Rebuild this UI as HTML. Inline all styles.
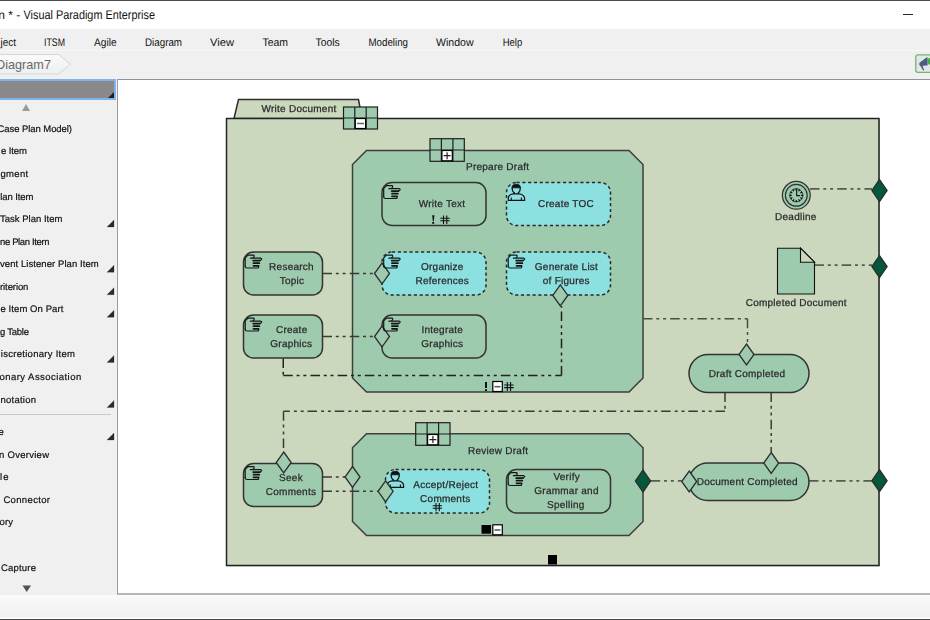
<!DOCTYPE html>
<html><head><meta charset="utf-8">
<style>
html,body{margin:0;padding:0;}
body{width:930px;height:620px;position:relative;overflow:hidden;background:#f0f0f0;font-family:"Liberation Sans",sans-serif;}
#diagram,#panelsvg{will-change:transform;}
.a{position:absolute;white-space:nowrap;}
#topline{left:0;top:0;width:930px;height:1px;background:#4b4b4b;}
#title{left:0;top:1px;width:930px;height:28px;background:#fff;}
#ttext{left:-4px;top:6px;font-size:11.5px;color:#1a1a1a;}
#minbtn{left:903px;top:14px;width:10px;height:1px;background:#222;}
#menu{left:0;top:29px;width:930px;height:21px;background:#f0f0f0;border-bottom:1px solid #f7f7f7;}
.mi{top:36px;font-size:10.5px;color:#1a1a1a;}
#crumbbar{left:0;top:51px;width:930px;height:28px;background:#f0f0f0;}
#panel{left:0;top:79px;width:117px;height:516px;background:#f0f0f0;overflow:hidden;}
.pi{font-size:10.5px;color:#1c1c1c;}
.tri{width:0;height:0;border-style:solid;border-width:0 0 7px 7px;border-color:transparent transparent #2b2b2b transparent;}
#canvas{left:117px;top:79px;width:813px;height:516px;background:#fff;border-left:1px solid #9a9ea3;border-top:1px solid #8f949a;border-bottom:2px solid #b3b6ba;box-sizing:border-box;}
#status{left:0;top:595px;width:930px;height:24px;background:linear-gradient(#fafafa 0%,#f0f1f2 85%,#eff0f2 92%,#ffffff 96%,#ffffff 100%);}
#botline{left:0;top:619px;width:930px;height:1px;background:#4b4b4b;}
</style></head>
<body>
<div class="a" id="topline"></div>
<div class="a" id="title"></div>
<div class="a" id="minbtn"></div>
<div class="a" id="menu"></div>
<div class="a" id="crumbbar"></div>
<svg class="a" style="left:0;top:0" width="600" height="50" font-family="Liberation Sans" text-rendering="geometricPrecision" fill="#111">
<text x="5" y="18.7" font-size="12" text-anchor="end">n</text><text x="8.2" y="18.7" font-size="12">*</text><text x="16.3" y="18.7" font-size="12">-</text>
<g transform="translate(23.5,18.7) scale(0.8695,1)"><text x="0" y="0" font-size="12.5">Visual Paradigm Enterprise</text></g>
<g transform="translate(16,45.5) scale(0.9,1)"><text x="0" y="0" font-size="11" text-anchor="end">ject</text></g>
<g transform="translate(44,45.5) scale(0.7992,1)"><text x="0" y="0" font-size="11">ITSM</text></g>
<g transform="translate(94,45.5) scale(0.9240,1)"><text x="0" y="0" font-size="11">Agile</text></g>
<g transform="translate(145,45.5) scale(0.8902,1)"><text x="0" y="0" font-size="11">Diagram</text></g>
<g transform="translate(210,45.5) scale(1.0151,1)"><text x="0" y="0" font-size="11">View</text></g>
<g transform="translate(262.4,45.5) scale(0.9518,1)"><text x="0" y="0" font-size="11">Team</text></g>
<g transform="translate(315.6,45.5) scale(0.9385,1)"><text x="0" y="0" font-size="11">Tools</text></g>
<g transform="translate(368.5,45.5) scale(0.8849,1)"><text x="0" y="0" font-size="11">Modeling</text></g>
<g transform="translate(436,45.5) scale(0.9611,1)"><text x="0" y="0" font-size="11">Window</text></g>
<g transform="translate(502.7,45.5) scale(0.8620,1)"><text x="0" y="0" font-size="11">Help</text></g>
</svg>
<!-- breadcrumb -->
<svg class="a" style="left:0;top:50px" width="80" height="28">
 <defs><linearGradient id="cg" x1="0" y1="0" x2="0" y2="1"><stop offset="0" stop-color="#fbfbfb"/><stop offset="1" stop-color="#eceef0"/></linearGradient></defs>
 <path d="M-5,4.5 H58.5 L70.5,14.3 L58.5,24 H-5 Z" fill="url(#cg)" stroke="#d3d6da" stroke-width="1"/>
 <text x="51" y="19.3" text-anchor="end" font-family="Liberation Sans" font-size="12.7" fill="#686868">Diagram7</text>
</svg>
<!-- megaphone button -->
<svg class="a" style="left:913px;top:53px" width="17" height="21">
 <rect x="2.8" y="1.9" width="20" height="17.4" rx="2" fill="#e4e6e8" stroke="#72b570" stroke-width="1.3"/>
 <path d="M6.2,11 Q6.2,9.5 7.5,9 L13.5,4.6 L14.6,4.3 L14.6,12.6 L13.5,12.4 L9.5,12.8 L11.2,17.2 L10.2,17.4 L7.4,13 Q6.2,12.5 6.2,11 Z" fill="#4c5c7c"/>
 <circle cx="18" cy="8.2" r="3.6" fill="#44b044"/>
</svg>
<div class="a" id="panel">
 <div class="a" style="left:0;top:0;width:116px;height:21px;background:#7db5eb;"></div>
 <div class="a" style="left:0;top:2px;width:114px;height:17px;background:#898989;"></div>
 <div class="a tri" style="left:108px;top:13px;border-width:0 0 6px 6px;border-color:transparent transparent #1e1e1e transparent;"></div>
 <div class="a" style="left:22px;top:25px;width:0;height:0;border-style:solid;border-width:0 4.5px 7px 4.5px;border-color:transparent transparent #9a9a9a transparent;"></div>
</div>
<div class="a" id="canvas"></div>
<div class="a" id="status"></div>
<div class="a" id="botline"></div>

<svg class="a" id="panelsvg" style="left:0;top:0" width="117" height="620" font-family="Liberation Sans" font-size="9.5" fill="#111" stroke="#111" stroke-width="0.2" text-rendering="geometricPrecision">
<text x="-2.5" y="131.8" textLength="74.5">Case Plan Model)</text>
<text x="1" y="154.4" textLength="26.0">e Item</text>
<text x="0.5" y="176.9" textLength="27.7">gment</text>
<text x="0.3" y="199.5" textLength="33.0">lan Item</text>
<text x="0" y="222.0" textLength="62.5">Task Plan Item</text>
<path d="M107,227.0 L114,227.0 L114,220.0 Z" fill="#2b2b2b"/>
<text x="0" y="244.6" textLength="49.4">ne Plan Item</text>
<text x="0" y="267.2" textLength="98.7">vent Listener Plan Item</text>
<path d="M107,272.2 L114,272.2 L114,265.2 Z" fill="#2b2b2b"/>
<text x="0" y="289.7" textLength="28.4">riterion</text>
<path d="M107,294.7 L114,294.7 L114,287.7 Z" fill="#2b2b2b"/>
<text x="0.5" y="312.3" textLength="62.8">e Item On Part</text>
<path d="M107,317.3 L114,317.3 L114,310.3 Z" fill="#2b2b2b"/>
<text x="0" y="334.8" textLength="29.0">g Table</text>
<text x="0.8" y="357.4" textLength="74.2">iscretionary Item</text>
<path d="M107,362.4 L114,362.4 L114,355.4 Z" fill="#2b2b2b"/>
<text x="-0.5" y="380.0" textLength="81.7">onary Association</text>
<text x="0.5" y="402.5" textLength="35.5">notation</text>
<path d="M107,407.5 L114,407.5 L114,400.5 Z" fill="#2b2b2b"/>
<text x="-1.5" y="435.0" textLength="4.9">e</text>
<path d="M107,440.0 L114,440.0 L114,433.0 Z" fill="#2b2b2b"/>
<text x="-1" y="457.6" textLength="50.0">n Overview</text>
<text x="0" y="480.2" textLength="8.5">le</text>
<text x="3.4" y="502.8" textLength="46.6">Connector</text>
<text x="-0.5" y="525.4" textLength="13.4">ory</text>
<text x="1" y="570.6" textLength="35.0">Capture</text>
<path d="M0,414.5 H111" stroke="#c9c9c9" stroke-width="1.2"/>
<path stroke="none" d="M22.5,585.5 H31 L26.75,592 Z" fill="#505050"/>
</svg>
<svg class="a" id="diagram" style="left:0;top:0" width="930" height="620" font-family="Liberation Sans" text-rendering="geometricPrecision">
<path d="M234,118.5 L238.5,99.5 H358.5 L362,118.5 Z" fill="#cbd8bd" stroke="#2d2d2d" stroke-width="1.5"/>
<rect x="227.5" y="119.5" width="652.5" height="447" fill="#777" opacity="0.35"/>
<rect x="226.5" y="118.5" width="652.5" height="447" fill="#cbd8bd" stroke="#222" stroke-width="1.5"/>
<text x="261.5" y="111.5" text-anchor="start" font-size="10" letter-spacing="0.25" fill="#2a2a2a" stroke="#2a2a2a" stroke-width="0.25">Write Document</text>
<rect x="343.5" y="107" width="34.0" height="22" fill="#9ecbae" stroke="#1e1e1e" stroke-width="1.2"/>
<path d="M354.8,107 V129 M366.2,107 V129 M343.5,118.0 H377.5" stroke="#1e1e1e" stroke-width="1.2" fill="none"/>
<rect x="355.3" y="118.5" width="10.3" height="10.0" fill="#fff" stroke="#000" stroke-width="1.2"/>
<path d="M357.0,123.5 H364.0" stroke="#666" stroke-width="1.5"/>
<path d="M366.5,150.5 H629 L643,164.5 V378 L629,392 H366.5 L352.5,378 V164.5 Z" fill="#9ecbae" stroke="#3d3f3c" stroke-width="1.5"/>
<rect x="430" y="138.7" width="34.30000000000001" height="22.600000000000023" fill="#9ecbae" stroke="#1e1e1e" stroke-width="1.2"/>
<path d="M441.4,138.7 V161.3 M452.9,138.7 V161.3 M430,150.0 H464.3" stroke="#1e1e1e" stroke-width="1.2" fill="none"/>
<rect x="441.9" y="150.5" width="10.4" height="10.3" fill="#fff" stroke="#000" stroke-width="1.2"/>
<path d="M443.6,155.7 H450.6 M447.1,152.2 V159.2" stroke="#222" stroke-width="1.2"/>
<text x="466" y="170.3" text-anchor="start" font-size="10" letter-spacing="0.25" fill="#2a2a2a" stroke="#2a2a2a" stroke-width="0.25">Prepare Draft</text>
<path d="M486,382 V388" stroke="#111" stroke-width="2"/><rect x="485" y="389.2" width="2" height="1.8" fill="#111"/>
<rect x="492.8" y="381.5" width="9.5" height="10" fill="#fff" stroke="#000" stroke-width="1.2"/><path d="M494.5,386.7 H500.5" stroke="#555" stroke-width="1.5"/>
<path d="M507.3,382 V391 M510.6,382 V391 M504.2,385 H513.7 M504.2,387.6 H513.7" stroke="#111" stroke-width="1.1"/>
<path d="M366.5,433.7 H629 L643,447.7 V521.5 L629,535.5 H366.5 L352.5,521.5 V447.7 Z" fill="#9ecbae" stroke="#3d3f3c" stroke-width="1.5"/>
<rect x="415.7" y="422.7" width="34.30000000000001" height="22.600000000000023" fill="#9ecbae" stroke="#1e1e1e" stroke-width="1.2"/>
<path d="M427.1,422.7 V445.3 M438.6,422.7 V445.3 M415.7,434.0 H450" stroke="#1e1e1e" stroke-width="1.2" fill="none"/>
<rect x="427.6" y="434.5" width="10.4" height="10.3" fill="#fff" stroke="#000" stroke-width="1.2"/>
<path d="M429.4,439.6 H436.4 M432.9,436.1 V443.1" stroke="#222" stroke-width="1.2"/>
<text x="468" y="454" text-anchor="start" font-size="10" letter-spacing="0.25" fill="#2a2a2a" stroke="#2a2a2a" stroke-width="0.25">Review Draft</text>
<rect x="481.5" y="525" width="9.5" height="8.7" fill="#000"/>
<rect x="492.8" y="524.8" width="9.5" height="10" fill="#fff" stroke="#000" stroke-width="1.2"/><path d="M494.5,530 H500.5" stroke="#555" stroke-width="1.5"/>
<rect x="548" y="555" width="9" height="9.5" fill="#000"/>
<path d="M322.5,273.5 L374.5,273.5" fill="none" stroke="#3a3a3a" stroke-width="1.5" stroke-dasharray="9.5 3.8 3 3.8 3 4.1"/>
<path d="M322.5,336.5 L374.5,336.5" fill="none" stroke="#3a3a3a" stroke-width="1.5" stroke-dasharray="9.5 3.8 3 3.8 3 4.1"/>
<path d="M283.25,358.5 L283.25,375.5" fill="none" stroke="#222" stroke-width="1.5" stroke-dasharray="9.5 3.8 3 3.8 3 4.1"/>
<path d="M283.25,375.5 L561.5,375.5" fill="none" stroke="#222" stroke-width="1.5" stroke-dasharray="9.5 3.8 3 3.8 3 4.1"/>
<path d="M561.5,375.5 L561.5,306" fill="none" stroke="#222" stroke-width="1.5" stroke-dasharray="9.5 3.8 3 3.8 3 4.1"/>
<path d="M643,318.8 L747.5,318.8" fill="none" stroke="#4a4d47" stroke-width="1.5" stroke-dasharray="9.5 3.8 3 3.8 3 4.1"/>
<path d="M747.5,318.8 L747.5,343.5" fill="none" stroke="#4a4d47" stroke-width="1.5" stroke-dasharray="9.5 3.8 3 3.8 3 4.1"/>
<path d="M725,392.5 L725,411.3" fill="none" stroke="#3a3a3a" stroke-width="1.5" stroke-dasharray="9.5 3.8 3 3.8 3 4.1"/>
<path d="M725,411.3 L283.5,411.3" fill="none" stroke="#3a3a3a" stroke-width="1.5" stroke-dasharray="9.5 3.8 3 3.8 3 4.1"/>
<path d="M283.5,411.3 L283.5,452" fill="none" stroke="#3a3a3a" stroke-width="1.5" stroke-dasharray="9.5 3.8 3 3.8 3 4.1"/>
<path d="M771.2,392.5 L771.2,452.3" fill="none" stroke="#3a3a3a" stroke-width="1.5" stroke-dasharray="9.5 3.8 3 3.8 3 4.1"/>
<path d="M322.5,477 L345,477" fill="none" stroke="#3a3a3a" stroke-width="1.5" stroke-dasharray="9.5 3.8 3 3.8 3 4.1"/>
<path d="M322.5,491.3 L378,491.3" fill="none" stroke="#3a3a3a" stroke-width="1.5" stroke-dasharray="9.5 3.8 3 3.8 3 4.1"/>
<path d="M650.7,480.8 L681.6,480.8" fill="none" stroke="#565b53" stroke-width="1.8" stroke-dasharray="9.5 3.8 3 3.8 3 4.1"/>
<path d="M809,480.8 L872,480.8" fill="none" stroke="#565b53" stroke-width="1.8" stroke-dasharray="9.5 3.8 3 3.8 3 4.1"/>
<path d="M810,188.8 L872,188.8" fill="none" stroke="#565b53" stroke-width="1.8" stroke-dasharray="9.5 3.8 3 3.8 3 4.1"/>
<path d="M814.5,265.2 L872,265.2" fill="none" stroke="#565b53" stroke-width="1.8" stroke-dasharray="9.5 3.8 3 3.8 3 4.1"/>
<rect x="382" y="182.5" width="104" height="43.0" rx="10" fill="#9ecbae" stroke="#333" stroke-width="1.5"/>
<text x="442" y="207" text-anchor="middle" font-size="10" letter-spacing="0.25" fill="#2a2a2a" stroke="#2a2a2a" stroke-width="0.25">Write Text</text>
<path d="M432.2,215.2 H434.4 L433.8,221.2 H432.8 Z" fill="#111"/><rect x="432.2" y="222" width="2" height="1.8" fill="#111"/>
<path d="M443.5,215.5 V224 M446.8,215.5 V224 M440.3,218.2 H449.7 M440.3,220.8 H449.7" stroke="#111" stroke-width="1.1"/>
<rect x="506.5" y="182.5" width="104.0" height="43.0" rx="10" fill="#8de0e0" stroke="#2a2a2a" stroke-width="1.5" stroke-dasharray="3.2 2.6"/>
<g transform="translate(505.0,181.0)" stroke="#111" fill="none">
<path d="M6.9,6.8 A4.3,3.5 0 0 1 15.5,6.8 Z" fill="#111" stroke="#111" stroke-width="0.8"/>
<path d="M7.1,6.8 Q7.1,10.8 9.4,11.9 V13 M15.3,6.8 Q15.3,10.8 13.2,11.9 V13" stroke-width="1.2"/>
<path d="M3.3,19.4 V17 Q3.6,13.2 8.6,12.8 H13.8 Q18.8,13.2 19.6,17 V19.4 Z" stroke-width="1.2"/>
<path d="M6.3,16.5 V19.4 M16.4,16.5 V19.4" stroke-width="1.1"/>
</g>
<text x="566" y="207" text-anchor="middle" font-size="10" letter-spacing="0.25" fill="#2a2a2a" stroke="#2a2a2a" stroke-width="0.25">Create TOC</text>
<rect x="243.5" y="252" width="79.0" height="43" rx="10" fill="#9ecbae" stroke="#333" stroke-width="1.5"/>
<text x="291.5" y="270" text-anchor="middle" font-size="10" letter-spacing="0.25" fill="#2a2a2a" stroke="#2a2a2a" stroke-width="0.25">Research</text>
<text x="292" y="284.3" text-anchor="middle" font-size="10" letter-spacing="0.25" fill="#2a2a2a" stroke="#2a2a2a" stroke-width="0.25">Topic</text>
<rect x="382" y="252" width="104" height="43" rx="10" fill="#8de0e0" stroke="#2a2a2a" stroke-width="1.5" stroke-dasharray="3.2 2.6"/>
<text x="442.3" y="270.3" text-anchor="middle" font-size="10" letter-spacing="0.25" fill="#2a2a2a" stroke="#2a2a2a" stroke-width="0.25">Organize</text>
<text x="442.3" y="284.3" text-anchor="middle" font-size="10" letter-spacing="0.25" fill="#2a2a2a" stroke="#2a2a2a" stroke-width="0.25">References</text>
<rect x="506.5" y="252" width="104.0" height="43" rx="10" fill="#8de0e0" stroke="#2a2a2a" stroke-width="1.5" stroke-dasharray="3.2 2.6"/>
<text x="566.5" y="270.3" text-anchor="middle" font-size="10" letter-spacing="0.25" fill="#2a2a2a" stroke="#2a2a2a" stroke-width="0.25">Generate List</text>
<text x="566.3" y="284.3" text-anchor="middle" font-size="10" letter-spacing="0.25" fill="#2a2a2a" stroke="#2a2a2a" stroke-width="0.25">of Figures</text>
<rect x="243.5" y="315" width="79.0" height="43" rx="10" fill="#9ecbae" stroke="#333" stroke-width="1.5"/>
<text x="291.7" y="333" text-anchor="middle" font-size="10" letter-spacing="0.25" fill="#2a2a2a" stroke="#2a2a2a" stroke-width="0.25">Create</text>
<text x="291.3" y="347" text-anchor="middle" font-size="10" letter-spacing="0.25" fill="#2a2a2a" stroke="#2a2a2a" stroke-width="0.25">Graphics</text>
<rect x="382" y="315" width="104" height="43" rx="10" fill="#9ecbae" stroke="#333" stroke-width="1.5"/>
<text x="442.3" y="333.3" text-anchor="middle" font-size="10" letter-spacing="0.25" fill="#2a2a2a" stroke="#2a2a2a" stroke-width="0.25">Integrate</text>
<text x="442.3" y="347.3" text-anchor="middle" font-size="10" letter-spacing="0.25" fill="#2a2a2a" stroke="#2a2a2a" stroke-width="0.25">Graphics</text>
<rect x="243.5" y="463.5" width="79.0" height="43.0" rx="10" fill="#9ecbae" stroke="#333" stroke-width="1.5"/>
<text x="291" y="481.3" text-anchor="middle" font-size="10" letter-spacing="0.25" fill="#2a2a2a" stroke="#2a2a2a" stroke-width="0.25">Seek</text>
<text x="291" y="495.3" text-anchor="middle" font-size="10" letter-spacing="0.25" fill="#2a2a2a" stroke="#2a2a2a" stroke-width="0.25">Comments</text>
<rect x="385.5" y="469.5" width="104.0" height="43.5" rx="10" fill="#8de0e0" stroke="#2a2a2a" stroke-width="1.5" stroke-dasharray="3.2 2.6"/>
<g transform="translate(384.0,468.0)" stroke="#111" fill="none">
<path d="M6.9,6.8 A4.3,3.5 0 0 1 15.5,6.8 Z" fill="#111" stroke="#111" stroke-width="0.8"/>
<path d="M7.1,6.8 Q7.1,10.8 9.4,11.9 V13 M15.3,6.8 Q15.3,10.8 13.2,11.9 V13" stroke-width="1.2"/>
<path d="M3.3,19.4 V17 Q3.6,13.2 8.6,12.8 H13.8 Q18.8,13.2 19.6,17 V19.4 Z" stroke-width="1.2"/>
<path d="M6.3,16.5 V19.4 M16.4,16.5 V19.4" stroke-width="1.1"/>
</g>
<text x="445.8" y="487.6" text-anchor="middle" font-size="10" letter-spacing="0.25" fill="#2a2a2a" stroke="#2a2a2a" stroke-width="0.25">Accept/Reject</text>
<text x="445.3" y="501.7" text-anchor="middle" font-size="10" letter-spacing="0.25" fill="#2a2a2a" stroke="#2a2a2a" stroke-width="0.25">Comments</text>
<path d="M436,503 V511.3 M439.3,503 V511.3 M432.7,505.7 H442 M432.7,508.3 H442" stroke="#111" stroke-width="1.1"/>
<rect x="506.5" y="469.5" width="104.0" height="43.5" rx="10" fill="#9ecbae" stroke="#333" stroke-width="1.5"/>
<text x="566.7" y="480" text-anchor="middle" font-size="10" letter-spacing="0.25" fill="#2a2a2a" stroke="#2a2a2a" stroke-width="0.25">Verify</text>
<text x="566.5" y="494.3" text-anchor="middle" font-size="10" letter-spacing="0.25" fill="#2a2a2a" stroke="#2a2a2a" stroke-width="0.25">Grammar and</text>
<text x="565.8" y="508.4" text-anchor="middle" font-size="10" letter-spacing="0.25" fill="#2a2a2a" stroke="#2a2a2a" stroke-width="0.25">Spelling</text>
<rect x="689" y="354.5" width="120" height="38.0" rx="19" fill="#9ecbae" stroke="#333" stroke-width="1.5"/>
<text x="747.1" y="376.7" text-anchor="middle" font-size="10" letter-spacing="0.25" fill="#2a2a2a" stroke="#2a2a2a" stroke-width="0.25">Draft Completed</text>
<rect x="689" y="463" width="120" height="37.5" rx="18.75" fill="#9ecbae" stroke="#333" stroke-width="1.5"/>
<text x="747.3" y="484.8" text-anchor="middle" font-size="10" letter-spacing="0.25" fill="#2a2a2a" stroke="#2a2a2a" stroke-width="0.25">Document Completed</text>
<circle cx="796.3" cy="195.3" r="13.9" fill="#9ecbae" stroke="#333" stroke-width="1.3"/>
<circle cx="796.3" cy="195.3" r="10.9" fill="#9ecbae" stroke="#333" stroke-width="1.2"/>
<circle cx="796.3" cy="195.3" r="6.6" fill="#9ecbae" stroke="#3a3a3a" stroke-width="1"/>
<path d="M796.30,190.70 L796.30,188.50 M798.60,191.32 L799.70,189.41 M800.28,193.00 L802.19,191.90 M800.90,195.30 L803.10,195.30 M800.28,197.60 L802.19,198.70 M798.60,199.28 L799.70,201.19 M796.30,199.90 L796.30,202.10 M794.00,199.28 L792.90,201.19 M792.32,197.60 L790.41,198.70 M791.70,195.30 L789.50,195.30 M792.32,193.00 L790.41,191.90 M794.00,191.32 L792.90,189.41" stroke="#111" stroke-width="1.2"/>
<path d="M796.6999999999999,188.8 V195.60000000000002 H799.9" fill="none" stroke="#111" stroke-width="1.1"/>
<text x="795.8" y="220.3" text-anchor="middle" font-size="10" letter-spacing="0.25" fill="#2a2a2a" stroke="#2a2a2a" stroke-width="0.25">Deadline</text>
<path d="M777.5,248.2 H800.5 L814.5,262.2 V294 H777.5 Z" fill="#9ecbae" stroke="#111" stroke-width="1.1"/>
<path d="M800.5,248.2 V262.2 H814.5 Z" fill="#cbd8bd" stroke="#111" stroke-width="1.1"/>
<text x="796.3" y="305.8" text-anchor="middle" font-size="10" letter-spacing="0.25" fill="#2a2a2a" stroke="#2a2a2a" stroke-width="0.25">Completed Document</text>
<path d="M382,263.0 L389.5,273.5 L382,284.0 L374.5,273.5 Z" fill="#9ecbae" stroke="#2d2d2d" stroke-width="1.3"/>
<path d="M382,326.0 L389.5,336.5 L382,347.0 L374.5,336.5 Z" fill="#9ecbae" stroke="#2d2d2d" stroke-width="1.3"/>
<path d="M560.3,284.9 L567.8,295.4 L560.3,305.9 L552.8,295.4 Z" fill="#9ecbae" stroke="#2d2d2d" stroke-width="1.3"/>
<path d="M283.7,452.0 L291.2,462.5 L283.7,473.0 L276.2,462.5 Z" fill="#9ecbae" stroke="#2d2d2d" stroke-width="1.3"/>
<path d="M352.5,466.5 L360.0,477 L352.5,487.5 L345.0,477 Z" fill="#9ecbae" stroke="#2d2d2d" stroke-width="1.3"/>
<path d="M385.6,480.8 L393.1,491.3 L385.6,501.8 L378.1,491.3 Z" fill="#9ecbae" stroke="#2d2d2d" stroke-width="1.3"/>
<path d="M746.5,344.0 L754.0,354.5 L746.5,365.0 L739.0,354.5 Z" fill="#9ecbae" stroke="#2d2d2d" stroke-width="1.3"/>
<path d="M771.2,452.5 L778.7,463 L771.2,473.5 L763.7,463 Z" fill="#9ecbae" stroke="#2d2d2d" stroke-width="1.3"/>
<path d="M689.2,471.0 L696.7,481.5 L689.2,492.0 L681.7,481.5 Z" fill="#9ecbae" stroke="#2d2d2d" stroke-width="1.3"/>
<path d="M643,470 L650.6,481 L643,492 L635.4,481 Z" fill="#03573a" stroke="#2d2d2d" stroke-width="1.3"/>
<path d="M879.5,179.5 L887.1,190.5 L879.5,201.5 L871.9,190.5 Z" fill="#03573a" stroke="#2d2d2d" stroke-width="1.3"/>
<path d="M879.5,255.60000000000002 L887.1,266.6 L879.5,277.6 L871.9,266.6 Z" fill="#03573a" stroke="#2d2d2d" stroke-width="1.3"/>
<path d="M879.5,469.7 L887.1,480.7 L879.5,491.7 L871.9,480.7 Z" fill="#03573a" stroke="#2d2d2d" stroke-width="1.3"/>
<g transform="translate(381.5,181.5)" fill="none" stroke="#151515" stroke-linecap="round">
<path d="M2.2,15.2 V6.9 L5,4.1 H10.4 Q11.6,4.4 11,5.8 L10.2,6.6" stroke-width="1.2"/>
<path d="M7.4,7.2 H17.8 Q19.3,7.7 18.3,8.6 L17.4,9.3" stroke-width="1.2"/>
<path d="M2.2,15.2 Q2.4,17 4,17 H14.8 Q16,16.7 15.5,15.6" stroke-width="1.2"/>
<path d="M10.2,9.6 H16.9 M10.5,12.2 H16.3 M10.5,14.8 H15.6" stroke-width="1.8"/>
</g>
<g transform="translate(243.0,251)" fill="none" stroke="#151515" stroke-linecap="round">
<path d="M2.2,15.2 V6.9 L5,4.1 H10.4 Q11.6,4.4 11,5.8 L10.2,6.6" stroke-width="1.2"/>
<path d="M7.4,7.2 H17.8 Q19.3,7.7 18.3,8.6 L17.4,9.3" stroke-width="1.2"/>
<path d="M2.2,15.2 Q2.4,17 4,17 H14.8 Q16,16.7 15.5,15.6" stroke-width="1.2"/>
<path d="M10.2,9.6 H16.9 M10.5,12.2 H16.3 M10.5,14.8 H15.6" stroke-width="1.8"/>
</g>
<g transform="translate(381.5,251)" fill="none" stroke="#151515" stroke-linecap="round">
<path d="M2.2,15.2 V6.9 L5,4.1 H10.4 Q11.6,4.4 11,5.8 L10.2,6.6" stroke-width="1.2"/>
<path d="M7.4,7.2 H17.8 Q19.3,7.7 18.3,8.6 L17.4,9.3" stroke-width="1.2"/>
<path d="M2.2,15.2 Q2.4,17 4,17 H14.8 Q16,16.7 15.5,15.6" stroke-width="1.2"/>
<path d="M10.2,9.6 H16.9 M10.5,12.2 H16.3 M10.5,14.8 H15.6" stroke-width="1.8"/>
</g>
<g transform="translate(506.0,251)" fill="none" stroke="#151515" stroke-linecap="round">
<path d="M2.2,15.2 V6.9 L5,4.1 H10.4 Q11.6,4.4 11,5.8 L10.2,6.6" stroke-width="1.2"/>
<path d="M7.4,7.2 H17.8 Q19.3,7.7 18.3,8.6 L17.4,9.3" stroke-width="1.2"/>
<path d="M2.2,15.2 Q2.4,17 4,17 H14.8 Q16,16.7 15.5,15.6" stroke-width="1.2"/>
<path d="M10.2,9.6 H16.9 M10.5,12.2 H16.3 M10.5,14.8 H15.6" stroke-width="1.8"/>
</g>
<g transform="translate(243.0,314)" fill="none" stroke="#151515" stroke-linecap="round">
<path d="M2.2,15.2 V6.9 L5,4.1 H10.4 Q11.6,4.4 11,5.8 L10.2,6.6" stroke-width="1.2"/>
<path d="M7.4,7.2 H17.8 Q19.3,7.7 18.3,8.6 L17.4,9.3" stroke-width="1.2"/>
<path d="M2.2,15.2 Q2.4,17 4,17 H14.8 Q16,16.7 15.5,15.6" stroke-width="1.2"/>
<path d="M10.2,9.6 H16.9 M10.5,12.2 H16.3 M10.5,14.8 H15.6" stroke-width="1.8"/>
</g>
<g transform="translate(381.5,314)" fill="none" stroke="#151515" stroke-linecap="round">
<path d="M2.2,15.2 V6.9 L5,4.1 H10.4 Q11.6,4.4 11,5.8 L10.2,6.6" stroke-width="1.2"/>
<path d="M7.4,7.2 H17.8 Q19.3,7.7 18.3,8.6 L17.4,9.3" stroke-width="1.2"/>
<path d="M2.2,15.2 Q2.4,17 4,17 H14.8 Q16,16.7 15.5,15.6" stroke-width="1.2"/>
<path d="M10.2,9.6 H16.9 M10.5,12.2 H16.3 M10.5,14.8 H15.6" stroke-width="1.8"/>
</g>
<g transform="translate(243.0,462.5)" fill="none" stroke="#151515" stroke-linecap="round">
<path d="M2.2,15.2 V6.9 L5,4.1 H10.4 Q11.6,4.4 11,5.8 L10.2,6.6" stroke-width="1.2"/>
<path d="M7.4,7.2 H17.8 Q19.3,7.7 18.3,8.6 L17.4,9.3" stroke-width="1.2"/>
<path d="M2.2,15.2 Q2.4,17 4,17 H14.8 Q16,16.7 15.5,15.6" stroke-width="1.2"/>
<path d="M10.2,9.6 H16.9 M10.5,12.2 H16.3 M10.5,14.8 H15.6" stroke-width="1.8"/>
</g>
<g transform="translate(506.0,468.5)" fill="none" stroke="#151515" stroke-linecap="round">
<path d="M2.2,15.2 V6.9 L5,4.1 H10.4 Q11.6,4.4 11,5.8 L10.2,6.6" stroke-width="1.2"/>
<path d="M7.4,7.2 H17.8 Q19.3,7.7 18.3,8.6 L17.4,9.3" stroke-width="1.2"/>
<path d="M2.2,15.2 Q2.4,17 4,17 H14.8 Q16,16.7 15.5,15.6" stroke-width="1.2"/>
<path d="M10.2,9.6 H16.9 M10.5,12.2 H16.3 M10.5,14.8 H15.6" stroke-width="1.8"/>
</g>
</svg>
</body></html>
